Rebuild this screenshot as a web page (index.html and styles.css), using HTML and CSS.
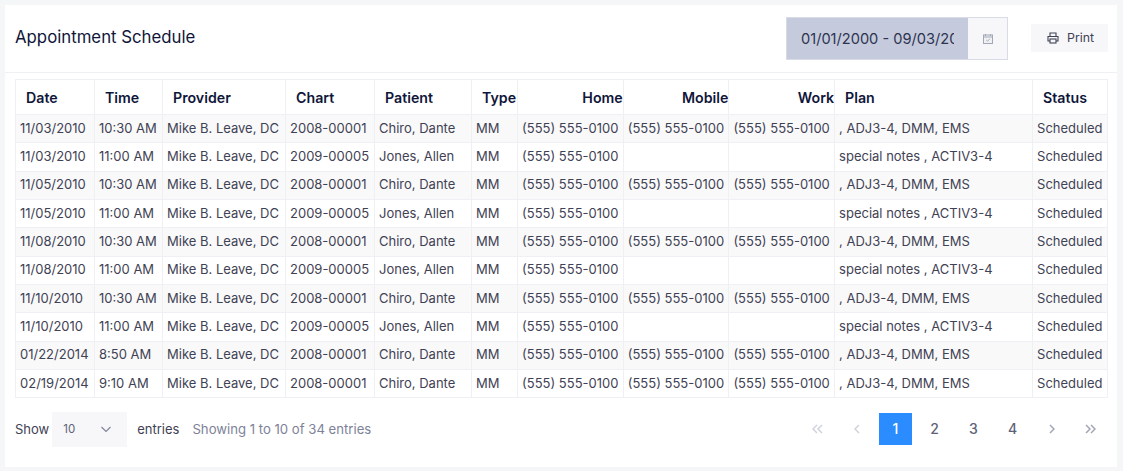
FILE: index.html
```html
<!DOCTYPE html>
<html lang="en">
<head>
    <meta charset="UTF-8">
    <title>Appointment Schedule</title>
    <link rel="stylesheet" href="styles.css">
</head>
<body>
    <div class="card">
        <div class="cardHeader">
            <h3 class="cardTitle">Appointment Schedule</h3>
            <div class="dateRange">
                <input class="dateInput" type="text" value="01/01/2000 - 09/03/2021" readonly>
                <span class="dateIcon">
                    <svg width="12" height="12" viewBox="0 0 12 12" fill="none" stroke="#a3a8b8" stroke-width="1">
                        <rect x="1.5" y="2" width="9" height="8.5" fill="#f0f1f5"/>
                        <path d="M1.5 4h9M3.5 1v2M8.5 1v2"/>
                        <path d="M4.3 7l1.2 1.2 2.2-2.2"/>
                    </svg>
                </span>
            </div>
            <button class="printButton">
                <svg width="12" height="12" viewBox="0 0 24 24" fill="none" stroke="#3f4254" stroke-width="2.2">
                    <path d="M6 9V2h12v7"/>
                    <path d="M6 18H2V9h20v9h-4"/>
                    <rect x="6" y="14" width="12" height="8"/>
                </svg>
                Print
            </button>
        </div>
        <div class="cardBody">
            <table class="scheduleTable">
                <colgroup>
                    <col class="colDate"><col class="colTime"><col class="colProvider"><col class="colChart">
                    <col class="colPatient"><col class="colType"><col class="colPhone"><col class="colPhone">
                    <col class="colPhone"><col class="colPlan"><col class="colStatus">
                </colgroup>
                <thead>
                    <tr>
                        <th>Date</th><th>Time</th><th>Provider</th><th>Chart</th><th>Patient</th><th>Type</th>
                        <th class="right">Home</th><th class="right">Mobile</th><th class="right">Work</th>
                        <th>Plan</th><th>Status</th>
                    </tr>
                </thead>
                <tbody>
                    <tr>
                        <td>11/03/2010</td><td>10:30 AM</td><td>Mike B. Leave, DC</td><td>2008-00001</td><td>Chiro, Dante</td><td>MM</td>
                        <td>(555) 555-0100</td><td>(555) 555-0100</td><td>(555) 555-0100</td><td>, ADJ3-4, DMM, EMS</td><td>Scheduled</td>
                    </tr>
                    <tr>
                        <td>11/03/2010</td><td>11:00 AM</td><td>Mike B. Leave, DC</td><td>2009-00005</td><td>Jones, Allen</td><td>MM</td>
                        <td>(555) 555-0100</td><td></td><td></td><td>special notes , ACTIV3-4</td><td>Scheduled</td>
                    </tr>
                    <tr>
                        <td>11/05/2010</td><td>10:30 AM</td><td>Mike B. Leave, DC</td><td>2008-00001</td><td>Chiro, Dante</td><td>MM</td>
                        <td>(555) 555-0100</td><td>(555) 555-0100</td><td>(555) 555-0100</td><td>, ADJ3-4, DMM, EMS</td><td>Scheduled</td>
                    </tr>
                    <tr>
                        <td>11/05/2010</td><td>11:00 AM</td><td>Mike B. Leave, DC</td><td>2009-00005</td><td>Jones, Allen</td><td>MM</td>
                        <td>(555) 555-0100</td><td></td><td></td><td>special notes , ACTIV3-4</td><td>Scheduled</td>
                    </tr>
                    <tr>
                        <td>11/08/2010</td><td>10:30 AM</td><td>Mike B. Leave, DC</td><td>2008-00001</td><td>Chiro, Dante</td><td>MM</td>
                        <td>(555) 555-0100</td><td>(555) 555-0100</td><td>(555) 555-0100</td><td>, ADJ3-4, DMM, EMS</td><td>Scheduled</td>
                    </tr>
                    <tr>
                        <td>11/08/2010</td><td>11:00 AM</td><td>Mike B. Leave, DC</td><td>2009-00005</td><td>Jones, Allen</td><td>MM</td>
                        <td>(555) 555-0100</td><td></td><td></td><td>special notes , ACTIV3-4</td><td>Scheduled</td>
                    </tr>
                    <tr>
                        <td>11/10/2010</td><td>10:30 AM</td><td>Mike B. Leave, DC</td><td>2008-00001</td><td>Chiro, Dante</td><td>MM</td>
                        <td>(555) 555-0100</td><td>(555) 555-0100</td><td>(555) 555-0100</td><td>, ADJ3-4, DMM, EMS</td><td>Scheduled</td>
                    </tr>
                    <tr>
                        <td>11/10/2010</td><td>11:00 AM</td><td>Mike B. Leave, DC</td><td>2009-00005</td><td>Jones, Allen</td><td>MM</td>
                        <td>(555) 555-0100</td><td></td><td></td><td>special notes , ACTIV3-4</td><td>Scheduled</td>
                    </tr>
                    <tr>
                        <td>01/22/2014</td><td>8:50 AM</td><td>Mike B. Leave, DC</td><td>2008-00001</td><td>Chiro, Dante</td><td>MM</td>
                        <td>(555) 555-0100</td><td>(555) 555-0100</td><td>(555) 555-0100</td><td>, ADJ3-4, DMM, EMS</td><td>Scheduled</td>
                    </tr>
                    <tr>
                        <td>02/19/2014</td><td>9:10 AM</td><td>Mike B. Leave, DC</td><td>2008-00001</td><td>Chiro, Dante</td><td>MM</td>
                        <td>(555) 555-0100</td><td>(555) 555-0100</td><td>(555) 555-0100</td><td>, ADJ3-4, DMM, EMS</td><td>Scheduled</td>
                    </tr>
                </tbody>
            </table>
            <div class="tableFooter">
                <span>Show</span>
                <div class="lengthSelect">
                    <span>10</span>
                    <svg width="12" height="12" viewBox="0 0 12 12" fill="none" stroke="#7e8299" stroke-width="1.1">
                        <path d="M1.5 4l4.5 4.5L10.5 4"/>
                    </svg>
                </div>
                <span>entries</span>
                <span class="tableInfo">Showing 1 to 10 of 34 entries</span>
                <div class="pagination">
                    <a class="pageLink disabled">
                        <svg width="11" height="10" viewBox="0 0 11 10" fill="none" stroke="currentColor" stroke-width="1.5"><path d="M5 1L1 5l4 4M10 1L6 5l4 4"/></svg>
                    </a>
                    <a class="pageLink disabled">
                        <svg width="6" height="10" viewBox="0 0 6 10" fill="none" stroke="currentColor" stroke-width="1.5"><path d="M5 1L1 5l4 4"/></svg>
                    </a>
                    <a class="pageLink active">1</a>
                    <a class="pageLink">2</a>
                    <a class="pageLink">3</a>
                    <a class="pageLink">4</a>
                    <a class="pageLink arrow">
                        <svg width="6" height="10" viewBox="0 0 6 10" fill="none" stroke="currentColor" stroke-width="1.5"><path d="M1 1l4 4-4 4"/></svg>
                    </a>
                    <a class="pageLink arrow">
                        <svg width="11" height="10" viewBox="0 0 11 10" fill="none" stroke="currentColor" stroke-width="1.5"><path d="M1 1l4 4-4 4M6 1l4 4-4 4"/></svg>
                    </a>
                </div>
            </div>
        </div>
    </div>
</body>
</html>
```

FILE: styles.css
```css
* {
    margin: 0;
    padding: 0;
    box-sizing: border-box;
}
body {
    background: #f5f6f8;
    font-family: Inter, "Liberation Sans", sans-serif;
    font-size: 13px;
    color: #3f4254;
    padding: 5px 6px 4px 5px;
    overflow: hidden;
}
.card {
    background: #fff;
    height: 462px;
}

/* шапка карточки */
.cardHeader {
    display: flex;
    align-items: center;
    height: 68px;
    padding: 0 9px 2px 10px;
    border-bottom: 1px solid #eff0f3;
}
.cardTitle {
    flex: 1;
    margin-bottom: 2px;
    font-size: 16.8px;
    font-weight: 400;
    color: #10163a;
}
.dateRange {
    display: flex;
    height: 43px;
    margin: 2px 23px 0 0;
    border: 1px solid #d9dce6;
}
.dateInput {
    width: 181px;
    padding: 0 14px;
    border: none;
    outline: none;
    background: #c5cbdd;
    font-family: inherit;
    font-size: 14.6px;
    color: #2e3350;
}
.dateIcon {
    display: flex;
    align-items: center;
    justify-content: center;
    width: 39px;
    background: #f7f7f9;
}
.printButton {
    display: flex;
    align-items: center;
    gap: 8px;
    width: 77px;
    height: 28px;
    padding-left: 16px;
    border: none;
    background: #f7f7f9;
    font-family: inherit;
    font-size: 12.35px;
    color: #3f4254;
}

/* таблица */
.cardBody {
    padding: 6px 10px 0;
}
.scheduleTable {
    width: 1092px;
    table-layout: fixed;
    border-collapse: collapse;
}
.colDate { width: 79px; }
.colTime { width: 68px; }
.colProvider { width: 123px; }
.colChart { width: 89px; }
.colPatient { width: 97px; }
.colType { width: 46px; }
.colPhone { width: 105.7px; }
.colPlan { width: 198px; }
.colStatus { width: 75px; }
.scheduleTable th,
.scheduleTable td {
    border: 1px solid #eff0f3;
    text-align: left;
    white-space: nowrap;
    overflow: hidden;
}
.scheduleTable th {
    height: 35px;
    padding: 0 0 0 10px;
    font-size: 14.2px;
    font-weight: 600;
    color: #10163a;
}
.scheduleTable th.right {
    padding: 0;
    text-align: right;
}
.scheduleTable td {
    height: 28.35px;
    padding: 0 0 2px 4px;
    font-size: 13px;
}
.scheduleTable tbody tr:nth-child(odd) {
    background: #f9f9fa;
}

/* низ таблицы */
.tableFooter {
    display: flex;
    align-items: center;
    height: 35px;
    margin-top: 13px;
}
.lengthSelect {
    display: flex;
    align-items: center;
    justify-content: space-between;
    width: 75px;
    height: 35px;
    margin: 2px 10px 0 3px;
    padding: 0 15px 2px 11px;
    background: #f7f7f9;
    font-size: 11.5px;
    color: #5e6278;
}
.tableInfo {
    margin-left: 13px;
    flex: 1;
    font-size: 13.15px;
    color: #7e8299;
}
.pagination {
    display: flex;
    gap: 6px;
}
.pageLink {
    display: flex;
    align-items: center;
    justify-content: center;
    width: 33px;
    height: 32px;
    font-size: 14px;
    font-weight: 500;
    color: #5e6278;
}
.pageLink.active {
    background: #2b8cff;
    color: #fff;
}
.pageLink.arrow {
    color: #a1a5b7;
}
.pageLink.disabled {
    color: #d0d3de;
}
```
